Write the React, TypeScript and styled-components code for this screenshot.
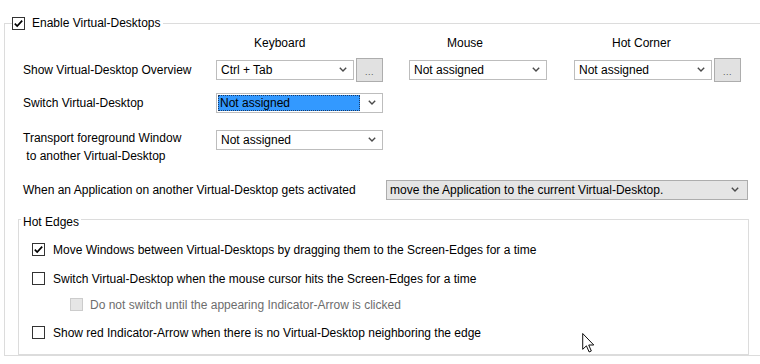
import React from 'react';
import styled, { createGlobalStyle } from 'styled-components';

const GlobalStyle = createGlobalStyle`
  html, body {
    margin: 0;
    padding: 0;
    background: #ffffff;
  }
  body {
    font-family: "Liberation Sans", Arial, sans-serif;
    font-size: 12px;
    color: #000000;
  }
`;

const Page = styled.div`
  position: relative;
  box-sizing: border-box;
  width: 760px;
  height: 364px;
  overflow: hidden;
  padding: 15px 0 0 4px;
`;

const MainGroup = styled.fieldset`
  box-sizing: border-box;
  width: 800px;
  min-inline-size: 0;
  margin: 0;
  padding: 0;
  border: 1px solid #dcdcdc;
`;

const MainLegend = styled.legend`
  margin-left: 7px;
  padding: 0 2px 0 0;
  line-height: 16px;
`;

const CheckLabel = styled.label<{ $gap: number; $disabled?: boolean }>`
  display: inline-flex;
  align-items: center;
  gap: ${(p) => p.$gap}px;
  color: ${(p) => (p.$disabled ? '#6d6d6d' : '#000000')};
  white-space: nowrap;
`;

const Box = styled.span<{ $disabled?: boolean }>`
  box-sizing: border-box;
  flex: none;
  width: 13px;
  height: 13px;
  display: inline-flex;
  align-items: center;
  justify-content: center;
  border: 1px solid ${(p) => (p.$disabled ? '#cccccc' : '#333333')};
  background: ${(p) => (p.$disabled ? '#e6e6e6' : '#ffffff')};
`;

const Body = styled.div`
  padding: 3px 0 0 13px;
`;

const ShortcutRow = styled.div<{ $top: number; $h: number; $align?: string }>`
  display: grid;
  grid-template-columns: 193px 193px 165px 170px;
  align-items: ${(p) => p.$align ?? 'center'};
  height: ${(p) => p.$h}px;
  margin-top: ${(p) => p.$top}px;
  padding-left: 5px;
`;

const ColumnHead = styled.div`
  padding-left: 38px;
  line-height: 14px;
`;

const RowLabel = styled.div`
  line-height: 18px;
  white-space: pre;
`;

const KeyCell = styled.div<{ $offset?: number }>`
  display: flex;
  align-items: center;
  gap: 2px;
  margin-top: ${(p) => p.$offset ?? 0}px;
`;

const Combo = styled.div<{ $w: number; $flat?: boolean; $focus?: boolean }>`
  box-sizing: border-box;
  width: ${(p) => p.$w}px;
  height: 20px;
  display: flex;
  align-items: center;
  padding: 0 ${(p) => (p.$flat ? 8 : 6)}px 0 ${(p) => (p.$focus ? 1 : p.$flat ? 3 : 4)}px;
  border: 1px solid ${(p) => (p.$flat ? '#adadad' : '#bdbdbd')};
  background: ${(p) => (p.$flat ? '#e5e5e5' : '#ffffff')};
`;

const ComboValue = styled.span<{ $selected?: boolean }>`
  flex: 1;
  box-sizing: border-box;
  height: 16px;
  line-height: 14px;
  white-space: nowrap;
  ${(p) =>
    p.$selected
      ? `
    background: #3399ff;
    outline: 1px dotted #1a3a66;
    outline-offset: -1px;
    padding: 1px 0 0 2px;
    margin-right: 8px;
  `
      : `
    padding-top: 1px;
  `}
`;

const DotsButton = styled.button`
  box-sizing: border-box;
  width: 27px;
  height: 24px;
  padding: 0 0 5px 0;
  display: flex;
  align-items: flex-end;
  justify-content: center;
  border: 1px solid #adadad;
  background: #e1e1e1;
  color: #555555;
  font-family: "Liberation Sans", Arial, sans-serif;
  font-size: 9px;
  line-height: 8px;
  letter-spacing: 0.5px;
`;

const AppRow = styled.div`
  display: grid;
  grid-template-columns: 363px 362px;
  align-items: center;
  height: 22px;
  margin-top: 14px;
  padding-left: 5px;
`;

const EdgeGroup = styled.fieldset`
  box-sizing: border-box;
  width: 731px;
  min-inline-size: 0;
  margin: 10px 0 0 0;
  padding: 0 0 13px 0;
  border: 1px solid #dcdcdc;
`;

const EdgeLegend = styled.legend`
  margin-left: 2px;
  padding: 4px 2px 0 2px;
  line-height: 14px;
`;

const OptionRow = styled.div<{ $top: number; $indent?: number }>`
  display: flex;
  align-items: center;
  height: 16px;
  margin-top: ${(p) => p.$top}px;
  padding-left: ${(p) => 13 + (p.$indent ?? 0)}px;
`;

const Cursor = styled.svg`
  position: absolute;
  left: 582px;
  top: 333px;
`;

const Tick = () => (
  <svg width="11" height="11" viewBox="0 0 11 11">
    <path d="M1.8 5.6 L4.2 8 L9.2 2.6" fill="none" stroke="#000" strokeWidth="1.7" />
  </svg>
);

const Chevron = () => (
  <svg width="8" height="5" viewBox="0 0 8 5" style={{ flex: 'none' }}>
    <path d="M0.8 0.8 L4 4 L7.2 0.8" fill="none" stroke="#4a4a4a" strokeWidth="1.4" />
  </svg>
);

type CheckProps = { label: string; checked?: boolean; disabled?: boolean; gap?: number };

const CheckBox = ({ label, checked, disabled, gap = 8 }: CheckProps) => (
  <CheckLabel $gap={gap} $disabled={disabled}>
    <Box $disabled={disabled}>{checked && <Tick />}</Box>
    {label}
  </CheckLabel>
);

type SelectProps = { value: string; width: number; flat?: boolean; focus?: boolean };

const Select = ({ value, width, flat, focus }: SelectProps) => (
  <Combo $w={width} $flat={flat} $focus={focus}>
    <ComboValue $selected={focus}>{value}</ComboValue>
    <Chevron />
  </Combo>
);

const App = () => {
  return (
    <Page>
      <GlobalStyle />
      <MainGroup>
        <MainLegend>
          <CheckBox label="Enable Virtual-Desktops" checked gap={7} />
        </MainLegend>
        <Body>
          <ShortcutRow $top={0} $h={14}>
            <div />
            <ColumnHead>Keyboard</ColumnHead>
            <ColumnHead>Mouse</ColumnHead>
            <ColumnHead>Hot Corner</ColumnHead>
          </ShortcutRow>

          <ShortcutRow $top={8} $h={24}>
            <RowLabel>Show Virtual-Desktop Overview</RowLabel>
            <KeyCell>
              <Select value="Ctrl + Tab" width={138} />
              <DotsButton>...</DotsButton>
            </KeyCell>
            <Select value="Not assigned" width={138} />
            <KeyCell>
              <Select value="Not assigned" width={138} />
              <DotsButton>...</DotsButton>
            </KeyCell>
          </ShortcutRow>

          <ShortcutRow $top={9} $h={24}>
            <RowLabel>Switch Virtual-Desktop</RowLabel>
            <Select value="Not assigned" width={167} focus />
          </ShortcutRow>

          <ShortcutRow $top={14} $h={36} $align="start">
            <RowLabel>{'Transport foreground Window\n to another Virtual-Desktop'}</RowLabel>
            <KeyCell $offset={1}>
              <Select value="Not assigned" width={167} />
            </KeyCell>
          </ShortcutRow>

          <AppRow>
            <RowLabel>When an Application on another Virtual-Desktop gets activated</RowLabel>
            <Select value="move the Application to the current Virtual-Desktop." width={362} flat />
          </AppRow>

          <EdgeGroup>
            <EdgeLegend>Hot Edges</EdgeLegend>
            <OptionRow $top={13}>
              <CheckBox
                label="Move Windows between Virtual-Desktops by dragging them to the Screen-Edges for a time"
                checked
              />
            </OptionRow>
            <OptionRow $top={13}>
              <CheckBox label="Switch Virtual-Desktop when the mouse cursor hits the Screen-Edges for a time" />
            </OptionRow>
            <OptionRow $top={10} $indent={38}>
              <CheckBox label="Do not switch until the appearing Indicator-Arrow is clicked" disabled gap={7} />
            </OptionRow>
            <OptionRow $top={12}>
              <CheckBox label="Show red Indicator-Arrow when there is no Virtual-Desktop neighboring the edge" />
            </OptionRow>
          </EdgeGroup>
        </Body>
      </MainGroup>

      <Cursor width="13" height="20" viewBox="0 0 12 19">
        <path
          d="M0.5 0.5 L0.5 15.5 L4 12.2 L6.6 18 L8.7 17.1 L6.2 11.4 L11 11.4 Z"
          fill="#ffffff"
          stroke="#000000"
          strokeWidth="0.9"
          strokeLinejoin="miter"
        />
      </Cursor>
    </Page>
  );
};

export default App;
